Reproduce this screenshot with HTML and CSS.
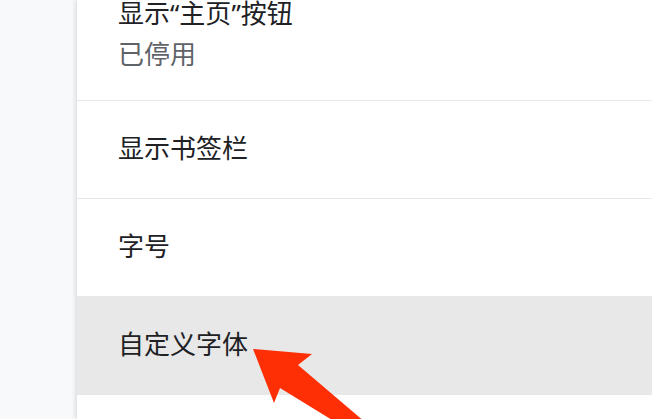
FILE: index.html
```html
<!DOCTYPE html>
<html lang="zh-CN">
<head>
<meta charset="utf-8">
<title>外观设置</title>
<link rel="stylesheet" href="styles.css">
</head>
<body>
<div class="layout">
  <aside class="sidebar"></aside>
  <main class="panel">
    <div class="list">
      <div class="row row-two">
        <div class="title">显示<span class="q">“</span>主页<span class="q">”</span>按钮</div>
        <div class="sub">已停用</div>
      </div>
      <div class="row"><div class="title">显示书签栏</div></div>
      <div class="row"><div class="title">字号</div></div>
      <div class="row row-hover"><div class="title">自定义字体</div></div>
      <div class="row"><div class="title">&nbsp;</div></div>
    </div>
  </main>
</div>
<svg class="arrow" width="652" height="419" viewBox="0 0 652 419" aria-hidden="true">
  <polygon points="253,349 312,354 298,365 372,428 350,431 280,388 274,403" fill="#fe2f05"/>
</svg>
</body>
</html>
```

FILE: styles.css
```css
html, body {
  margin: 0;
  padding: 0;
  width: 652px;
  height: 419px;
  overflow: hidden;
  background: #f8f9fa;
  font-family: "Noto Sans CJK SC", "Noto Sans", sans-serif;
}

.layout {
  display: flex;
  height: 419px;
}

.sidebar {
  width: 77px;
  flex: 0 0 77px;
  background: #f8f9fa;
}

.panel {
  flex: 1;
  background: #ffffff;
  box-shadow: -2px 0 4px rgba(60, 64, 67, 0.14);
  position: relative;
  z-index: 1;
  overflow: hidden;
}

.list {
  margin-top: -32px;
}

.row {
  padding: 26px 0 32px 41px;
  border-bottom: 1px solid #e8e8e8;
}

.row-two {
  padding-top: 24px;
  padding-bottom: 28px;
}

.row-hover {
  background: #e8e8e8;
  border-bottom-color: #e8e8e8;
}

.title {
  font-size: 26px;
  line-height: 39px;
  color: #202124;
}

.q {
  font-family: "Noto Sans", "DejaVu Sans", sans-serif;
}

.sub {
  font-size: 26px;
  line-height: 39px;
  color: #5f6368;
}

.arrow {
  position: absolute;
  left: 0;
  top: 0;
  z-index: 2;
  pointer-events: none;
}
```
